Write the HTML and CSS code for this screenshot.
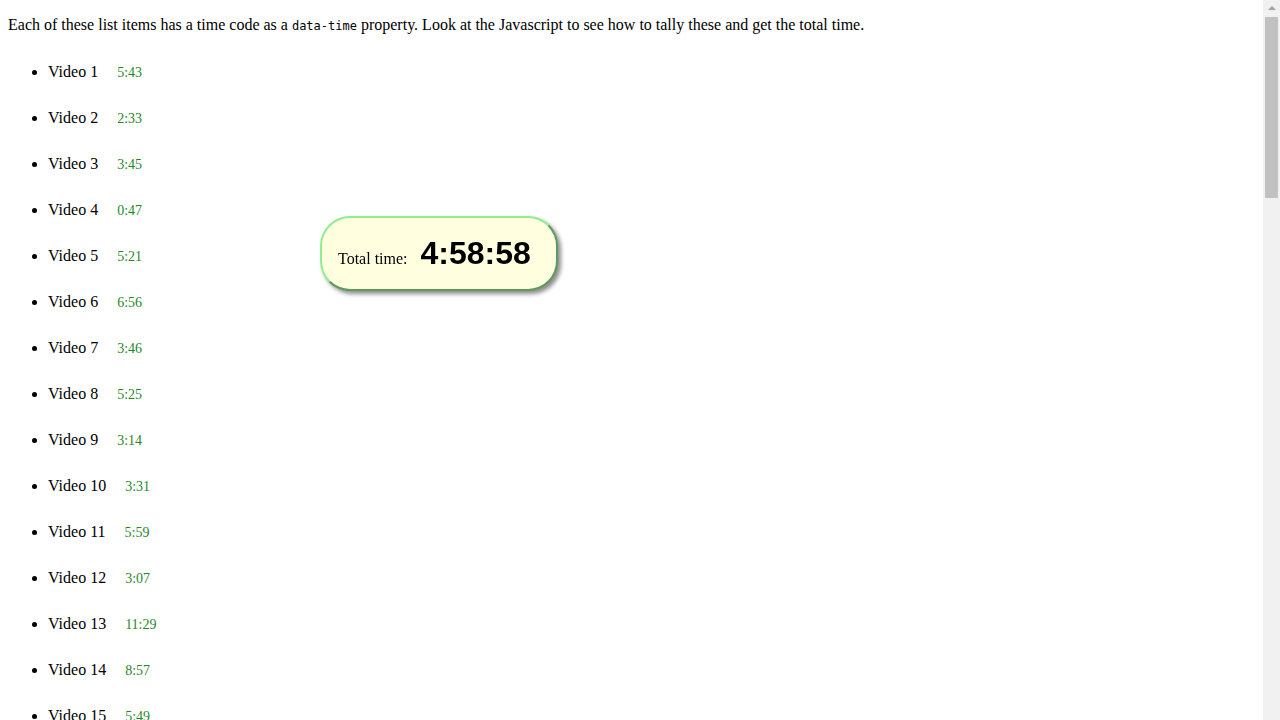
FILE: index.html
```html
<!DOCTYPE html>
<html lang="en">
<head>
<meta charset="utf-8">
<title>Videos</title>
<link rel="stylesheet" href="styles.css">
</head>
<body>
<p class="intro">Each of these list items has a time code as a <code class="code">data-time</code> property. Look at the Javascript to see how to tally these and get the total time.</p>
<ul class="videos">
<li class="video">Video 1<span class="time">5:43</span></li>
<li class="video">Video 2<span class="time">2:33</span></li>
<li class="video">Video 3<span class="time">3:45</span></li>
<li class="video">Video 4<span class="time">0:47</span></li>
<li class="video">Video 5<span class="time">5:21</span></li>
<li class="video">Video 6<span class="time">6:56</span></li>
<li class="video">Video 7<span class="time">3:46</span></li>
<li class="video">Video 8<span class="time">5:25</span></li>
<li class="video">Video 9<span class="time">3:14</span></li>
<li class="video">Video 10<span class="time">3:31</span></li>
<li class="video">Video 11<span class="time">5:59</span></li>
<li class="video">Video 12<span class="time">3:07</span></li>
<li class="video">Video 13<span class="time">11:29</span></li>
<li class="video">Video 14<span class="time">8:57</span></li>
<li class="video">Video 15<span class="time">5:49</span></li>
<li class="video">Video 16<span class="time">5:52</span></li>
<li class="video">Video 17<span class="time">5:50</span></li>
<li class="video">Video 18<span class="time">9:13</span></li>
<li class="video">Video 19<span class="time">11:51</span></li>
<li class="video">Video 20<span class="time">7:58</span></li>
<li class="video">Video 21<span class="time">4:40</span></li>
<li class="video">Video 22<span class="time">4:45</span></li>
<li class="video">Video 23<span class="time">6:46</span></li>
<li class="video">Video 24<span class="time">7:24</span></li>
<li class="video">Video 25<span class="time">7:12</span></li>
<li class="video">Video 26<span class="time">5:23</span></li>
<li class="video">Video 27<span class="time">3:34</span></li>
<li class="video">Video 28<span class="time">8:22</span></li>
<li class="video">Video 29<span class="time">5:17</span></li>
<li class="video">Video 30<span class="time">3:10</span></li>
<li class="video">Video 31<span class="time">4:43</span></li>
<li class="video">Video 32<span class="time">19:43</span></li>
<li class="video">Video 33<span class="time">0:47</span></li>
<li class="video">Video 34<span class="time">0:47</span></li>
<li class="video">Video 35<span class="time">3:14</span></li>
<li class="video">Video 36<span class="time">3:59</span></li>
<li class="video">Video 37<span class="time">2:43</span></li>
<li class="video">Video 38<span class="time">4:17</span></li>
<li class="video">Video 39<span class="time">6:56</span></li>
<li class="video">Video 40<span class="time">3:05</span></li>
<li class="video">Video 41<span class="time">2:06</span></li>
<li class="video">Video 42<span class="time">1:59</span></li>
<li class="video">Video 43<span class="time">1:49</span></li>
<li class="video">Video 44<span class="time">3:36</span></li>
<li class="video">Video 45<span class="time">7:10</span></li>
<li class="video">Video 46<span class="time">3:44</span></li>
<li class="video">Video 47<span class="time">3:44</span></li>
<li class="video">Video 48<span class="time">4:36</span></li>
<li class="video">Video 49<span class="time">3:16</span></li>
<li class="video">Video 50<span class="time">1:10</span></li>
<li class="video">Video 51<span class="time">6:10</span></li>
<li class="video">Video 52<span class="time">2:14</span></li>
<li class="video">Video 53<span class="time">3:44</span></li>
<li class="video">Video 54<span class="time">5:05</span></li>
<li class="video">Video 55<span class="time">6:03</span></li>
<li class="video">Video 56<span class="time">12:39</span></li>
<li class="video">Video 57<span class="time">1:56</span></li>
<li class="video">Video 58<span class="time">4:04</span></li>
</ul>
<div class="total"><span class="total-label">Total time:</span><span class="total-value">4:58:58</span></div>
<div class="scrollbar" aria-hidden="true"><span class="scroll-arrow"></span><span class="scroll-thumb"></span></div>
</body>
</html>
```
FILE: styles.css
```css
body {
  margin: 8px;
  font-family: "Liberation Serif", "Times New Roman", serif;
  font-size: 16px;
  color: #000;
  background: #fff;
}

.intro {
  margin: 8px 0 15px;
}

.code {
  font-family: "DejaVu Sans Mono", "Liberation Mono", monospace;
  font-size: 12px;
}

.videos {
  margin: 15px 0 16px;
  padding-left: 40px;
}

.video {
  padding: 14px 0;
}

.time {
  margin-left: 19px;
  font-size: 14px;
  color: #1f8a1f;
}

.total {
  position: fixed;
  top: 216px;
  left: 320px;
  padding: 17px 25px 17px 16px;
  background: #ffffe0;
  border: 2px outset #90ee90;
  border-radius: 30px;
  box-shadow: 3px 3px 4px rgba(0, 0, 0, 0.45);
}

.total-label {
  font-size: 16px;
}

.total-value {
  margin-left: 13px;
  font-family: "Liberation Sans", Arial, sans-serif;
  font-size: 32px;
  font-weight: bold;
}

.scrollbar {
  position: fixed;
  top: 0;
  right: 0;
  bottom: 0;
  width: 17px;
  background: #f1f1f1;
  display: flex;
  flex-direction: column;
  align-items: center;
}

.scroll-arrow {
  display: block;
  width: 0;
  height: 0;
  margin: 6px 0 7px;
  border-left: 4px solid transparent;
  border-right: 4px solid transparent;
  border-bottom: 4px solid #a3a3a3;
}

.scroll-thumb {
  display: block;
  width: 13px;
  height: 181px;
  background: #c1c1c1;
}
```
